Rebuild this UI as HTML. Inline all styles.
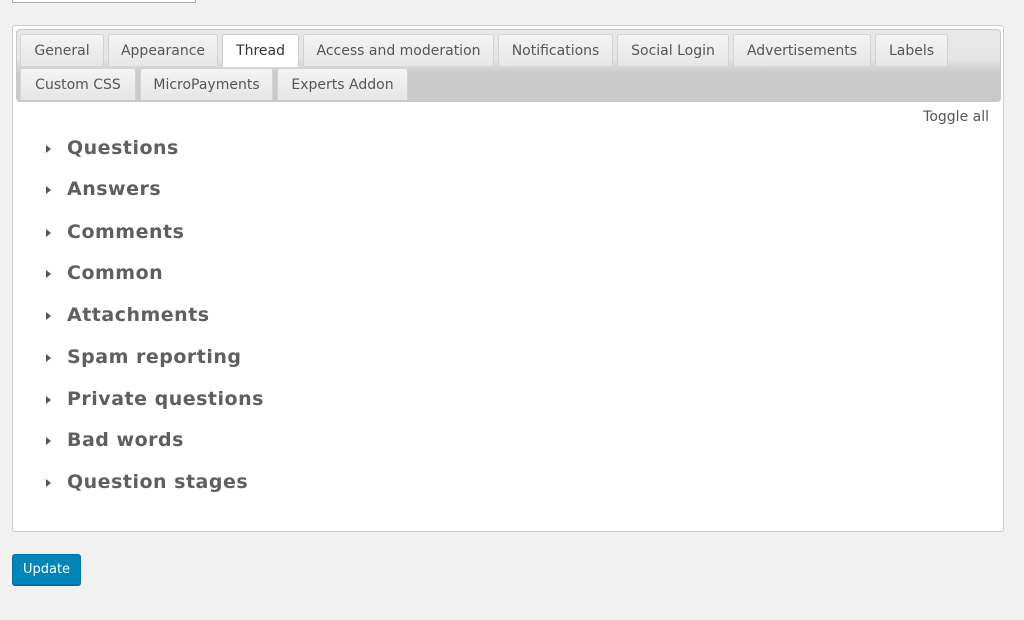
<!DOCTYPE html>
<html><head><style>
body{margin:0;background:#f1f1f1;width:1024px;height:620px;position:relative;font-family:"DejaVu Sans","Liberation Sans",sans-serif;overflow:hidden}
.inp{position:absolute;left:12px;top:-10px;width:182px;height:11px;border:1px solid #aaa;background:#fff}
.box{position:absolute;left:12px;top:25px;width:990px;height:505px;border:1px solid #ccc;border-radius:3px;background:#fff}
.hdr{position:absolute;left:16px;top:29px;width:983px;height:71px;border:1px solid #c8c8c8;border-radius:4px;background:linear-gradient(#e8e8e8,#e6e6e6 40%,#cbcbcb 60%,#c9c9c9)}
.tab{position:absolute;height:32px;line-height:32px;text-align:center;font-size:14px;color:#555;background:linear-gradient(#f4f4f4,#e6e6e6);border:1px solid #d3d3d3;border-bottom:none;border-radius:3px 3px 0 0;box-sizing:border-box}
.tab.a{background:#fff;color:#333;border-color:#ccc}
.tg{position:absolute;right:35px;top:109px;font-size:14px;color:#555}
.h{position:absolute;left:67px;font-size:19px;font-weight:bold;color:#5f5f5f;letter-spacing:0.5px}
.h:before{content:"";position:absolute;left:-21px;top:8px;border-left:5px solid #555;border-top:4px solid transparent;border-bottom:4px solid transparent}
.btn{position:absolute;left:12px;top:554px;width:69px;height:31px;background:#0085ba;border:1px solid #0073aa;border-radius:3px;box-sizing:border-box;color:#fff;font-size:13px;line-height:29px;text-align:center;box-shadow:0 1px 0 #006799}
</style></head><body>
<div class="inp"></div>
<div class="box"></div>
<div class="hdr"></div>
<div class="tab" style="left:20px;top:34px;width:84px">General</div>
<div class="tab" style="left:108px;top:34px;width:110px">Appearance</div>
<div class="tab a" style="left:222px;top:34px;width:77px;height:33px">Thread</div>
<div class="tab" style="left:303px;top:34px;width:191px">Access and moderation</div>
<div class="tab" style="left:498px;top:34px;width:115px">Notifications</div>
<div class="tab" style="left:617px;top:34px;width:112px">Social Login</div>
<div class="tab" style="left:733px;top:34px;width:138px">Advertisements</div>
<div class="tab" style="left:875px;top:34px;width:73px">Labels</div>
<div class="tab" style="left:20px;top:68px;width:116px">Custom CSS</div>
<div class="tab" style="left:140px;top:68px;width:133px">MicroPayments</div>
<div class="tab" style="left:277px;top:68px;width:131px">Experts Addon</div>
<div class="tg">Toggle all</div>
<div class="h" style="top:137px">Questions</div>
<div class="h" style="top:178px">Answers</div>
<div class="h" style="top:221px">Comments</div>
<div class="h" style="top:262px">Common</div>
<div class="h" style="top:304px">Attachments</div>
<div class="h" style="top:346px">Spam reporting</div>
<div class="h" style="top:388px">Private questions</div>
<div class="h" style="top:429px">Bad words</div>
<div class="h" style="top:471px">Question stages</div>
<div class="btn">Update</div>
</body></html>
